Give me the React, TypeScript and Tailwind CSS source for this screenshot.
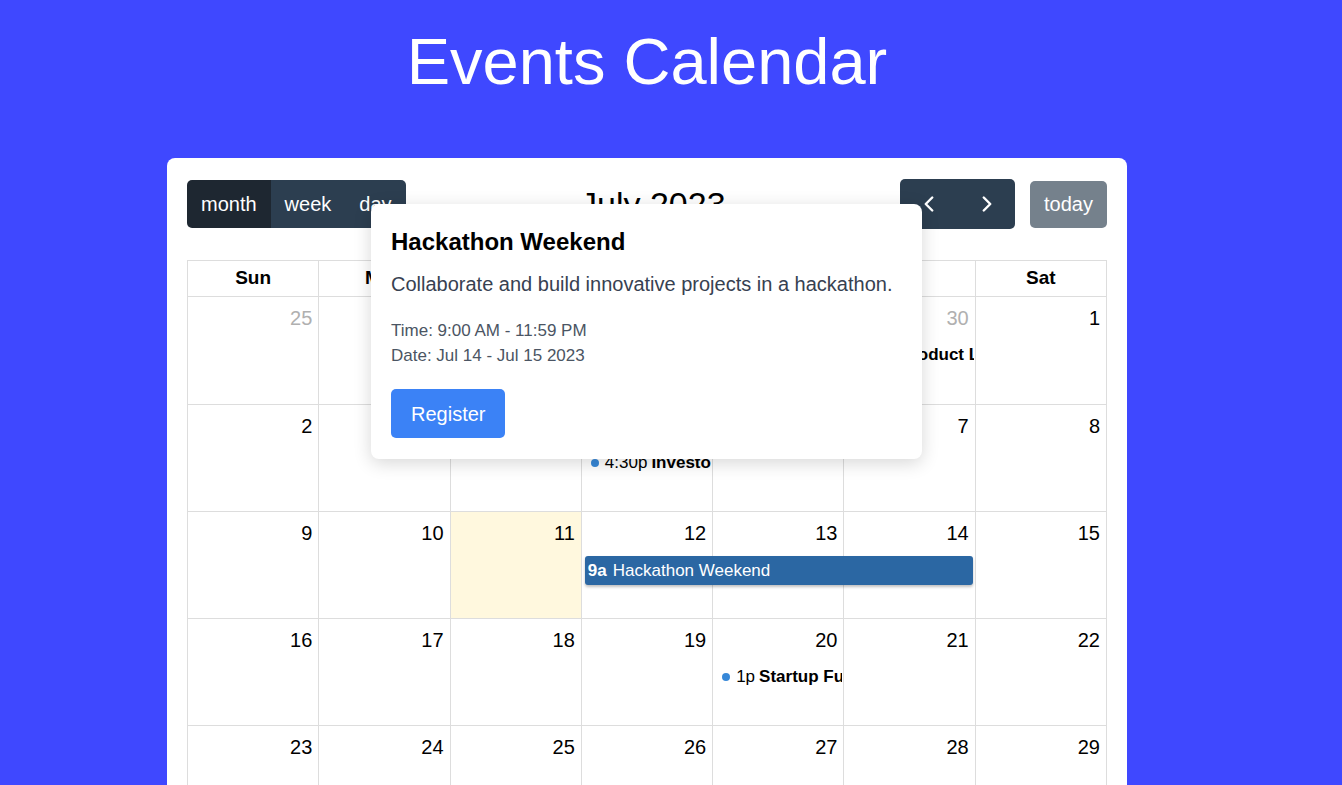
import { ChevronLeft, ChevronRight } from "lucide-react";

type CalEvent = {
  col: number;
  kind: "dot" | "bar";
  time: string;
  title: string;
  span?: number;
};

type Week = {
  days: number[];
  events: CalEvent[];
};

const COL_START: Record<number, string> = {
  1: "col-start-1",
  2: "col-start-2",
  3: "col-start-3",
  4: "col-start-4",
  5: "col-start-5",
  6: "col-start-6",
  7: "col-start-7",
};

const COL_SPAN: Record<number, string> = {
  1: "col-span-1",
  2: "col-span-2",
  3: "col-span-3",
  4: "col-span-4",
};

const WEEKDAYS = ["Sun", "Mon", "Tue", "Wed", "Thu", "Fri", "Sat"];

const WEEKS: Week[] = [
  {
    days: [25, 26, 27, 28, 29, 30, 1],
    events: [{ col: 6, kind: "dot", time: "10a", title: "Product Launch" }],
  },
  {
    days: [2, 3, 4, 5, 6, 7, 8],
    events: [{ col: 4, kind: "dot", time: "4:30p", title: "Investor Meetup" }],
  },
  {
    days: [9, 10, 11, 12, 13, 14, 15],
    events: [
      { col: 4, span: 3, kind: "bar", time: "9a", title: "Hackathon Weekend" },
    ],
  },
  {
    days: [16, 17, 18, 19, 20, 21, 22],
    events: [{ col: 5, kind: "dot", time: "1p", title: "Startup Funding Workshop" }],
  },
  { days: [23, 24, 25, 26, 27, 28, 29], events: [] },
  { days: [30, 31, 1, 2, 3, 4, 5], events: [] },
];

function isOtherMonth(weekIdx: number, day: number) {
  if (weekIdx === 0 && day > 20) return true;
  if (weekIdx === 5 && day < 10) return true;
  return false;
}

function EventChip({ ev }: { ev: CalEvent }) {
  const place = `${COL_START[ev.col]} ${COL_SPAN[ev.span ?? 1]}`;

  if (ev.kind === "bar") {
    return (
      <div
        className={`row-start-1 ${place} self-start mt-[44px] mx-[3px] h-[29px] flex items-center px-[3px] bg-[#2b67a3] rounded-[3px] shadow-[0_2px_3px_rgba(0,0,0,0.25)] text-white text-[17px] whitespace-nowrap overflow-hidden z-[1]`}
      >
        <span className="font-bold">{ev.time}</span>
        <span className="ml-[6px]">{ev.title}</span>
      </div>
    );
  }

  return (
    <div
      className={`row-start-1 ${place} self-start mt-[46px] mr-[2px] h-[24px] flex items-center text-[17px] text-black whitespace-nowrap overflow-hidden min-w-0 z-[1]`}
    >
      <span className="ml-[9px] w-2 h-2 shrink-0 rounded-full bg-[#3788d8]" />
      <span className="ml-[6px]">{ev.time}</span>
      <span className="ml-[4px] font-bold">{ev.title}</span>
    </div>
  );
}

function Toolbar() {
  return (
    <div className="flex items-center justify-between h-[48px] mb-[32px]">
      {/* view switcher */}
      <div className="flex rounded-[5px] overflow-hidden text-[20px] leading-[28px] text-white">
        <button className="px-[14px] py-[10px] bg-[#1e2731]">month</button>
        <button className="px-[14px] py-[10px] bg-[#2c3e50]">week</button>
        <button className="px-[14px] py-[10px] bg-[#2c3e50]">day</button>
      </div>

      <h2 className="text-[34px] leading-none text-black">July 2023</h2>

      <div className="flex items-center gap-[15px]">
        <div className="flex rounded-[5px] overflow-hidden bg-[#2c3e50] text-white">
          <button className="w-[58px] h-[50px] flex items-center justify-center">
            <ChevronLeft size={26} strokeWidth={2.25} />
          </button>
          <button className="w-[57px] h-[50px] flex items-center justify-center">
            <ChevronRight size={26} strokeWidth={2.25} />
          </button>
        </div>
        <button className="h-[47px] px-[14px] rounded-[5px] bg-[#2c3e50] opacity-65 text-white text-[20px] leading-[28px]">
          today
        </button>
      </div>
    </div>
  );
}

function EventPopover() {
  return (
    <div className="absolute left-[204px] top-[46px] w-[551px] z-10 bg-white rounded-lg shadow-[0_4px_18px_rgba(0,0,0,0.16)] px-5 pt-5 pb-[21px]">
      <h3 className="text-[24px] leading-[36px] font-bold text-black">Hackathon Weekend</h3>
      <p className="mt-[10px] text-[20px] leading-[28px] text-[#374151]">
        Collaborate and build innovative projects in a hackathon.
      </p>
      <div className="mt-[20px] text-[17px] leading-[25px] text-[#4b5563]">
        <p>Time: 9:00 AM - 11:59 PM</p>
        <p>Date: Jul 14 - Jul 15 2023</p>
      </div>
      <button className="mt-[21px] h-[49px] px-5 rounded-[5px] bg-[#3b82f6] text-white text-[20px] leading-[28px]">
        Register
      </button>
    </div>
  );
}

export default function App() {
  return (
    <div className="min-h-screen bg-[#3f48ff] font-['Liberation_Sans',Arial,sans-serif] pr-[48px] pb-10">
      <h1 className="pt-[29px] text-center text-[65px] leading-none text-white">Events Calendar</h1>

      <div className="relative mx-auto mt-[64px] w-[960px] bg-white rounded-lg px-5 pt-[22px] pb-5">
        <Toolbar />

        {/* month grid */}
        <div className="border-l border-t border-[#ddd]">
          <div className="grid grid-cols-7 h-[36px]">
            {WEEKDAYS.map((d) => (
              <div
                key={d}
                className="flex items-center justify-center border-r border-b border-[#ddd] text-[19px] font-bold text-black"
              >
                {d}
              </div>
            ))}
          </div>

          {WEEKS.map((week, wi) => (
            <div
              key={wi}
              className={`grid grid-cols-7 ${wi === 0 ? "grid-rows-[108px]" : "grid-rows-[107px]"}`}
            >
              {week.days.map((day, di) => {
                const other = isOtherMonth(wi, day);
                const today = wi === 2 && day === 11;
                return (
                  <div
                    key={di}
                    className={`row-start-1 ${COL_START[di + 1]} border-r border-b border-[#ddd] flex justify-end pt-[8px] pr-[6px] ${
                      today ? "bg-[#fff8de]" : "bg-white"
                    }`}
                  >
                    <span
                      className={`text-[20px] leading-[26px] h-[26px] ${
                        other ? "text-[#b0b0b0]" : "text-black"
                      }`}
                    >
                      {day}
                    </span>
                  </div>
                );
              })}
              {week.events.map((ev, ei) => (
                <EventChip key={ei} ev={ev} />
              ))}
            </div>
          ))}
        </div>

        <EventPopover />
      </div>
    </div>
  );
}
